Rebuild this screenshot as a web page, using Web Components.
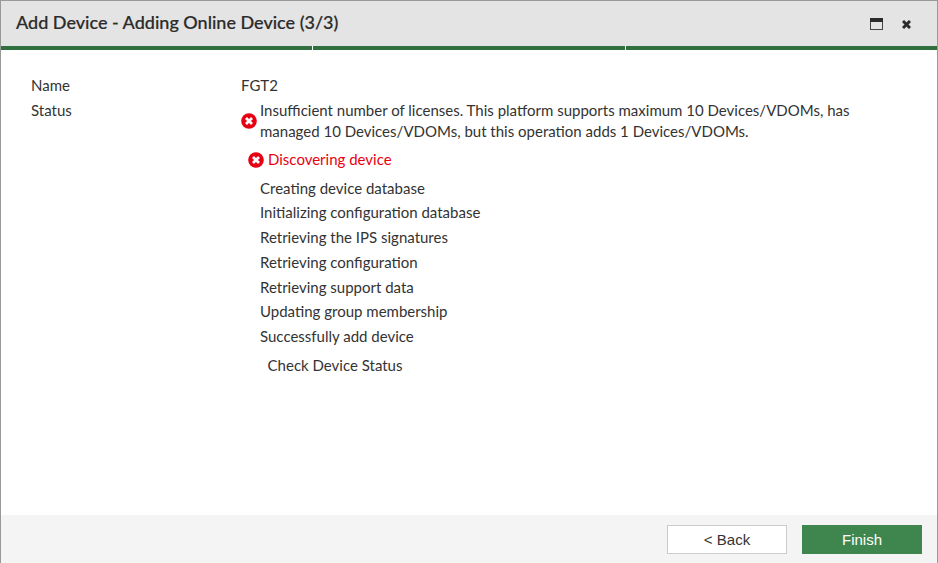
<!DOCTYPE html>
<html>
<head>
<meta charset="utf-8">
<title>Add Device</title>
<style>
    html, body { margin: 0; height: 100%; }
    body { font-family: Lato, sans-serif; font-size: 15px; color: #333; overflow: hidden; }
</style>
</head>
<body>
<add-device-dialog>
    <span slot="title">Add Device - Adding Online Device (3/3)</span>
    <detail-row label="Name"><div class="plain">FGT2</div></detail-row>
    <detail-row label="Status">
        <status-message state="error">Insufficient number of licenses. This platform supports maximum 10 Devices/VDOMs, has<br>managed 10 Devices/VDOMs, but this operation adds 1 Devices/VDOMs.</status-message>
        <status-steps>
            <status-message state="failed">Discovering device</status-message>
            <step-item>Creating device database</step-item>
            <step-item>Initializing configuration database</step-item>
            <step-item>Retrieving the IPS signatures</step-item>
            <step-item>Retrieving configuration</step-item>
            <step-item>Retrieving support data</step-item>
            <step-item>Updating group membership</step-item>
            <step-item>Successfully add device</step-item>
            <step-item last>Check Device Status</step-item>
        </status-steps>
    </detail-row>
    <dialog-button slot="footer">&lt; Back</dialog-button>
    <dialog-button slot="footer" primary>Finish</dialog-button>
</add-device-dialog>

<script>
const errorIcon = `
    <svg width="16" height="16" viewBox="0 0 16 16">
        <circle cx="8" cy="8" r="7.8" fill="#e60012"/>
        <path d="M5 5l6 6M11 5l-6 6" stroke="#fff" stroke-width="2.8" fill="none"/>
    </svg>`;

class AddDeviceDialog extends HTMLElement {
    constructor() {
        super();
        const shadow = this.attachShadow({ mode: "open" });
        shadow.innerHTML = `
            <style>
                :host {
                    display: flex;
                    flex-direction: column;
                    height: 563px;
                    box-sizing: border-box;
                    border: 1px solid #999;
                    border-bottom: none;
                    background: #fff;
                }
                header {
                    display: flex;
                    align-items: center;
                    justify-content: space-between;
                    height: 45px;
                    flex: none;
                    background: #e4e4e4;
                    padding: 0 26px 0 15px;
                    font-size: 18px;
                    font-weight: 500;
                    color: #2b2b2b;
                }
                .title { position: relative; top: -2px; -webkit-text-stroke: 0.2px #2b2b2b; }
                .controls { display: flex; align-items: center; gap: 19px; }
                .controls svg { display: block; }
                .controls svg + svg { margin-top: 2px; }
                .progress {
                    display: grid;
                    grid-template-columns: 311px 312px 1fr;
                    gap: 1px;
                    flex: none;
                    height: 4px;
                }
                .progress div { background: #316f3f; }
                main {
                    flex: 1;
                    display: flex;
                    flex-direction: column;
                    padding: 23px 15px 0 30px;
                }
                footer {
                    display: flex;
                    justify-content: flex-end;
                    gap: 15px;
                    flex: none;
                    height: 48px;
                    box-sizing: border-box;
                    padding: 10px 15px 0 0;
                    background: #f4f4f4;
                }
            </style>
            <header>
                <div class="title"><slot name="title"></slot></div>
                <div class="controls">
                    <svg width="13" height="12" viewBox="0 0 13 12">
                        <rect x="0.5" y="0.5" width="12" height="11" fill="#e4e4e4" stroke="#444"/>
                        <rect x="0" y="0" width="13" height="4" fill="#2b2b2b"/>
                    </svg>
                    <svg width="9" height="9" viewBox="0 0 9 9">
                        <path d="M1 1l7 7M8 1l-7 7" stroke="#2b2b2b" stroke-width="3" fill="none"/>
                    </svg>
                </div>
            </header>
            <div class="progress"><div></div><div></div><div></div></div>
            <main><slot></slot></main>
            <footer><slot name="footer"></slot></footer>
        `;
    }
}

class DetailRow extends HTMLElement {
    constructor() {
        super();
        const shadow = this.attachShadow({ mode: "open" });
        shadow.innerHTML = `
            <style>
                :host {
                    display: grid;
                    grid-template-columns: 210px 1fr;
                    line-height: 25px;
                    color: #333;
                }
            </style>
            <div id="label"></div>
            <div><slot></slot></div>
        `;
    }

    connectedCallback() {
        this.shadowRoot.getElementById("label").textContent = this.getAttribute("label");
    }
}

class StatusMessage extends HTMLElement {
    constructor() {
        super();
        const shadow = this.attachShadow({ mode: "open" });
        shadow.innerHTML = `
            <style>
                :host {
                    display: flex;
                    align-items: center;
                    gap: 3px;
                    line-height: 25px;
                }
                :host([state="error"]) { line-height: 21px; padding-top: 2px; }
                :host([state="failed"]) { color: #ea0010; margin-left: 7px; gap: 4px; }
                svg { display: block; flex: none; }
            </style>
            ${errorIcon}
            <div><slot></slot></div>
        `;
    }
}

class StatusSteps extends HTMLElement {
    constructor() {
        super();
        const shadow = this.attachShadow({ mode: "open" });
        shadow.innerHTML = `
            <style>
                :host {
                    display: flex;
                    flex-direction: column;
                    margin-top: 5px;
                }
            </style>
            <slot></slot>
        `;
    }
}

class StepItem extends HTMLElement {
    constructor() {
        super();
        const shadow = this.attachShadow({ mode: "open" });
        shadow.innerHTML = `
            <style>
                :host {
                    display: block;
                    padding-left: 19px;
                    height: 24.7px;
                    line-height: 24.7px;
                }
                :host(:nth-child(2)) { margin-top: 3.8px; }
                :host([last]) { padding-left: 26.6px; margin-top: 4.2px; }
            </style>
            <slot></slot>
        `;
    }
}

class DialogButton extends HTMLElement {
    constructor() {
        super();
        const shadow = this.attachShadow({ mode: "open" });
        shadow.innerHTML = `
            <style>
                :host {
                    display: flex;
                    align-items: center;
                    justify-content: center;
                    width: 120px;
                    height: 29px;
                    box-sizing: border-box;
                    border: 1px solid #ccc;
                    background: #fff;
                    color: #333;
                    font-family: "Liberation Sans", Arial, sans-serif;
                    font-size: 15px;
                }
                :host([primary]) {
                    border-color: #3e864e;
                    background: #3e864e;
                    color: #fff;
                }
            </style>
            <slot></slot>
        `;
    }
}

customElements.define("add-device-dialog", AddDeviceDialog);
customElements.define("detail-row", DetailRow);
customElements.define("status-message", StatusMessage);
customElements.define("status-steps", StatusSteps);
customElements.define("step-item", StepItem);
customElements.define("dialog-button", DialogButton);
</script>
</body>
</html>
